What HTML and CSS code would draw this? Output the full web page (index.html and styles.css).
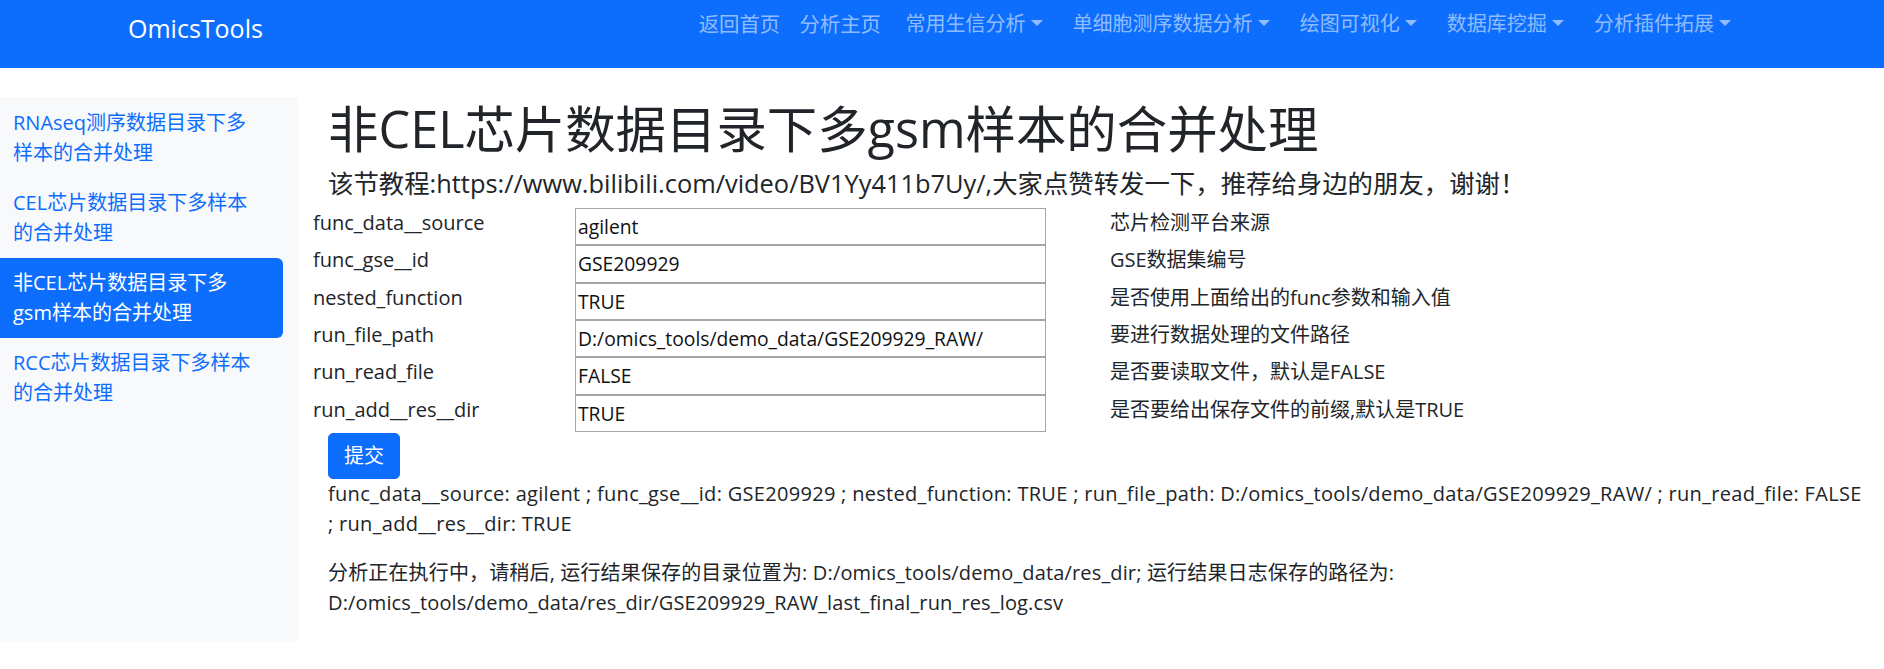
FILE: index.html
```html
<!DOCTYPE html>
<html lang="zh-CN">
<head>
    <meta charset="UTF-8">
    <meta name="viewport" content="width=device-width, initial-scale=1.0">
    <title>OmicsTools</title>
    <link rel="stylesheet" href="styles.css">
</head>
<body>
    <!-- Barra superior -->
    <nav class="navbar">
        <a class="brand" href="#">OmicsTools</a>
        <ul class="menu">
            <li><a class="menu-link" href="#">返回首页</a></li>
            <li><a class="menu-link" href="#">分析主页</a></li>
            <li><a class="menu-link dropdown" href="#">常用生信分析</a></li>
            <li><a class="menu-link dropdown" href="#">单细胞测序数据分析</a></li>
            <li><a class="menu-link dropdown" href="#">绘图可视化</a></li>
            <li><a class="menu-link dropdown" href="#">数据库挖掘</a></li>
            <li><a class="menu-link dropdown" href="#">分析插件拓展</a></li>
        </ul>
    </nav>

    <div class="layout">
        <!-- Menu lateral -->
        <aside class="sidebar">
            <a class="side-link" href="#">RNAseq测序数据目录下多样本的合并处理</a>
            <a class="side-link" href="#">CEL芯片数据目录下多样本的合并处理</a>
            <a class="side-link active" href="#">非CEL芯片数据目录下多gsm样本的合并处理</a>
            <a class="side-link" href="#">RCC芯片数据目录下多样本的合并处理</a>
        </aside>

        <main class="content">
            <h1>非CEL芯片数据目录下多gsm样本的合并处理</h1>
            <h5 class="subtitle">该节教程:https://www.bilibili.com/video/BV1Yy411b7Uy/,大家点赞转发一下，推荐给身边的朋友，谢谢！</h5>

            <div class="params">
                <div class="param-row">
                    <label for="func_data__source">func_data__source</label>
                    <div><input type="text" id="func_data__source" value="agilent"></div>
                    <span class="param-desc">芯片检测平台来源</span>
                </div>
                <div class="param-row">
                    <label for="func_gse__id">func_gse__id</label>
                    <div><input type="text" id="func_gse__id" value="GSE209929"></div>
                    <span class="param-desc">GSE数据集编号</span>
                </div>
                <div class="param-row">
                    <label for="nested_function">nested_function</label>
                    <div><input type="text" id="nested_function" value="TRUE"></div>
                    <span class="param-desc">是否使用上面给出的func参数和输入值</span>
                </div>
                <div class="param-row">
                    <label for="run_file_path">run_file_path</label>
                    <div><input type="text" id="run_file_path" value="D:/omics_tools/demo_data/GSE209929_RAW/"></div>
                    <span class="param-desc">要进行数据处理的文件路径</span>
                </div>
                <div class="param-row">
                    <label for="run_read_file">run_read_file</label>
                    <div><input type="text" id="run_read_file" value="FALSE"></div>
                    <span class="param-desc">是否要读取文件，默认是FALSE</span>
                </div>
                <div class="param-row">
                    <label for="run_add__res__dir">run_add__res__dir</label>
                    <div><input type="text" id="run_add__res__dir" value="TRUE"></div>
                    <span class="param-desc">是否要给出保存文件的前缀,默认是TRUE</span>
                </div>
            </div>

            <button class="btn-submit">提交</button>

            <p class="result">func_data__source: agilent ; func_gse__id: GSE209929 ; nested_function: TRUE ; run_file_path: D:/omics_tools/demo_data/GSE209929_RAW/ ; run_read_file: FALSE ; run_add__res__dir: TRUE</p>
            <p class="result status">分析正在执行中，请稍后, 运行结果保存的目录位置为: D:/omics_tools/demo_data/res_dir; 运行结果日志保存的路径为: D:/omics_tools/demo_data/res_dir/GSE209929_RAW_last_final_run_res_log.csv</p>
        </main>
    </div>
</body>
</html>
```

FILE: styles.css
```css
body {
    margin: 0;
    font-family: "Open Sans", "Noto Sans CJK SC", sans-serif;
    font-size: 20px;
    line-height: 1.5;
    color: #212529;
    background: #fff;
}

a {
    text-decoration: none;
}

/* navbar */
.navbar {
    display: flex;
    align-items: flex-start;
    height: 68px;
    box-sizing: border-box;
    padding: 9px 138px 0 128px;
    background-color: #0d6efd;
}

.brand {
    color: #fff;
    font-size: 25px;
    line-height: 37px;
    margin-top: 1px;
}

.menu {
    display: flex;
    list-style: none;
    margin: 0 0 0 auto;
    padding: 0;
}

.menu-link {
    display: block;
    padding: 0 9.6px;
    font-size: 20.4px;
    line-height: 30px;
    color: rgba(255, 255, 255, 0.55);
}

.menu-link.dropdown {
    padding: 0 15px;
    font-size: 20px;
}

.menu-link.dropdown::after {
    content: "";
    display: inline-block;
    margin-left: 0.255em;
    vertical-align: 0.255em;
    border-top: 0.3em solid;
    border-right: 0.3em solid transparent;
    border-left: 0.3em solid transparent;
}

/* layout */
.layout {
    display: grid;
    grid-template-columns: 298px 1fr;
    margin-top: 29px;
}

.sidebar {
    height: 545px;
    padding: 1px 15px 0 0;
    box-sizing: border-box;
    background-color: #f8f9fa;
}

.side-link {
    display: block;
    padding: 10px 25px 10px 13px;
    line-height: 30px;
    color: #0d6efd;
    border-radius: 0 6px 6px 0;
}

.side-link.active {
    background-color: #0d6efd;
    color: #fff;
}

.content {
    padding: 0 20px 0 30px;
    min-width: 0;
}

h1 {
    margin: 2px 0 9px 0;
    font-size: 50.4px;
    font-weight: 400;
    line-height: 60px;
}

.subtitle {
    margin: 0 0 10px 0;
    font-size: 25.4px;
    font-weight: 400;
    line-height: 30px;
}

/* parametros */
.params {
    margin-left: -15px;
}

.param-row {
    display: grid;
    grid-template-columns: 262px 535px 1fr;
    height: 37.33px;
}

.param-row input {
    width: 471px;
    height: 37.33px;
    box-sizing: border-box;
    padding: 0 2px;
    margin: 0;
    border: 1px solid #a6a6a6;
    font-family: inherit;
    font-size: 19.3px;
    color: #111;
    background: #fff;
}

.btn-submit {
    display: block;
    margin-top: 1px;
    padding: 7px 15px;
    border: 1px solid #0d6efd;
    border-radius: 5px;
    background-color: #0d6efd;
    color: #fff;
    font-family: inherit;
    font-size: 20px;
    line-height: 30px;
    cursor: pointer;
}

.result {
    margin: 0 0 19px 0;
    letter-spacing: 0.3px;
}

.result.status {
    letter-spacing: 0.15px;
}
```
